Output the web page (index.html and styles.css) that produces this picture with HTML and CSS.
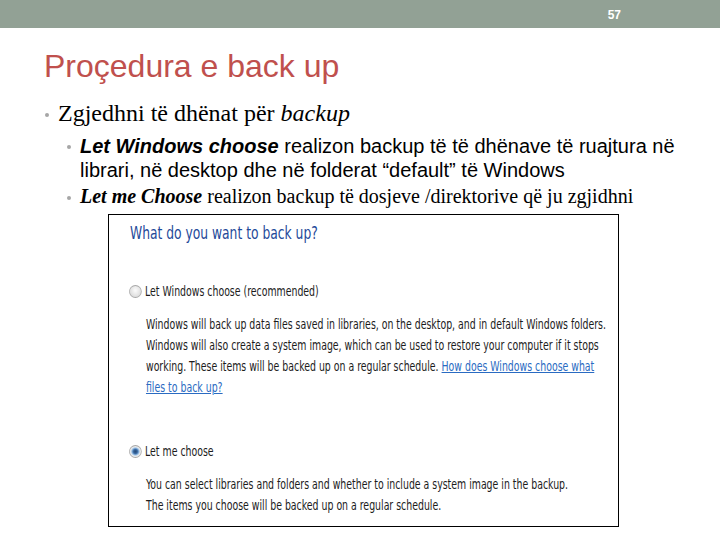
FILE: index.html
```html
<!DOCTYPE html>
<html>
<head>
<meta charset="utf-8">
<link rel="stylesheet" href="styles.css">
</head>
<body>
<div class="topbar"><span class="pagenum">57</span></div>
<div class="content">
  <h1 class="title">Proçedura e back up</h1>
  <ul class="l1">
    <li>Zgjedhni të dhënat për <i>backup</i>
      <ul class="l2">
        <li class="sans"><b><i>Let Windows choose</i></b> realizon backup të të dhënave të ruajtura në librari, në desktop dhe në folderat “default” të Windows</li>
        <li class="serif"><b><i>Let me Choose</i></b> realizon backup të dosjeve /direktorive që ju zgjidhni</li>
      </ul>
    </li>
  </ul>
  <div class="shot">
    <div class="shot-inner">
      <div class="shot-title">What do you want to back up?</div>
      <div class="opt">
        <span class="radio"></span>
        <span>Let Windows choose (recommended)</span>
      </div>
      <div class="desc">Windows will back up data files saved in libraries, on the desktop, and in default Windows folders.<br>Windows will also create a system image, which can be used to restore your computer if it stops<br>working. These items will be backed up on a regular schedule. <a class="link">How does Windows choose what<br>files to back up?</a></div>
      <div class="opt opt2">
        <span class="radio checked"></span>
        <span>Let me choose</span>
      </div>
      <div class="desc desc2">You can select libraries and folders and whether to include a system image in the backup.<br>The items you choose will be backed up on a regular schedule.</div>
    </div>
  </div>
</div>
</body>
</html>
```
FILE: styles.css
```css
html, body { margin: 0; padding: 0; background: #fff; }
body { width: 720px; height: 540px; overflow: hidden; }
.topbar {
  height: 28px;
  background: #92a195;
  display: flex;
  justify-content: flex-end;
  align-items: center;
  padding-right: 99px;
}
.pagenum {
  font-family: "Liberation Sans", Arial, sans-serif;
  font-weight: bold;
  font-size: 12px;
  color: #fff;
  padding-top: 2px;
}
.content { padding-left: 44px; padding-right: 36px; }
.title {
  margin: 20px 0 0 0;
  font-family: "Liberation Sans", Arial, sans-serif;
  font-weight: normal;
  font-size: 32px;
  line-height: 36px;
  color: #c0504d;
}
ul { list-style: none; margin: 0; padding: 0; }
.l1 > li {
  position: relative;
  font-family: "Liberation Serif", "Times New Roman", serif;
  font-size: 24px;
  line-height: 28px;
  padding-left: 14px;
  margin-top: 15px;
}
.l1 > li::before, .l2 > li::before {
  content: "";
  position: absolute;
  width: 4px;
  height: 4px;
  border-radius: 50%;
  background: #a6a6a6;
}
.l1 > li::before { left: 1px; top: 14px; }
.l2 { margin-top: 7px; margin-left: 8px; }
.l2 > li {
  position: relative;
  padding-left: 14px;
  line-height: 24px;
}
.l2 > li.sans::before { left: 1px; top: 11px; }
.l2 > li.serif::before { left: 1px; top: 12px; }
.l2 > li.sans { font-family: "Liberation Sans", Arial, sans-serif; font-size: 20px; }
.l2 > li.serif {
  font-family: "Liberation Serif", "Times New Roman", serif;
  font-size: 20px;
  margin-top: 2px;
}
.shot {
  margin-left: 64px;
  margin-top: 6px;
  width: 509px;
  height: 311px;
  border: 1px solid #000;
  overflow: hidden;
}
.shot-inner {
  width: 684px;
  transform: scaleX(0.744);
  transform-origin: 0 0;
  font-family: "DejaVu Sans Condensed", "DejaVu Sans", sans-serif;
  color: #1c1c1c;
  white-space: nowrap;
}
.shot-title {
  font-size: 18.4px;
  line-height: 22px;
  color: #1f4a9a;
  padding: 7px 0 0 28.2px;
}
.opt {
  display: flex;
  align-items: center;
  margin: 39px 0 0 26.9px;
  font-size: 14px;
  line-height: 16px;
}
.opt2 { margin-top: 45.5px; }
.radio {
  width: 15.1px;
  height: 11px;
  margin-right: 4.5px;
  border-radius: 50%;
  border: 1px solid #a8a8a8;
  background: radial-gradient(ellipse at 50% 40%, #fcfcfc 0%, #e0e0e0 65%, #c6c6c6 100%);
}
.radio.checked {
  background: radial-gradient(ellipse at 50% 50%, #22456f 0%, #3a6aa3 28%, #93bde6 45%, #eeeeee 60%, #cfcfcf 100%);
}
.desc {
  margin: 14.6px 0 0 49.7px;
  font-size: 14px;
  line-height: 21px;
}
.desc2 { margin-top: 14.7px; }
.link { color: #2a6bc2; text-decoration: underline; }
```
